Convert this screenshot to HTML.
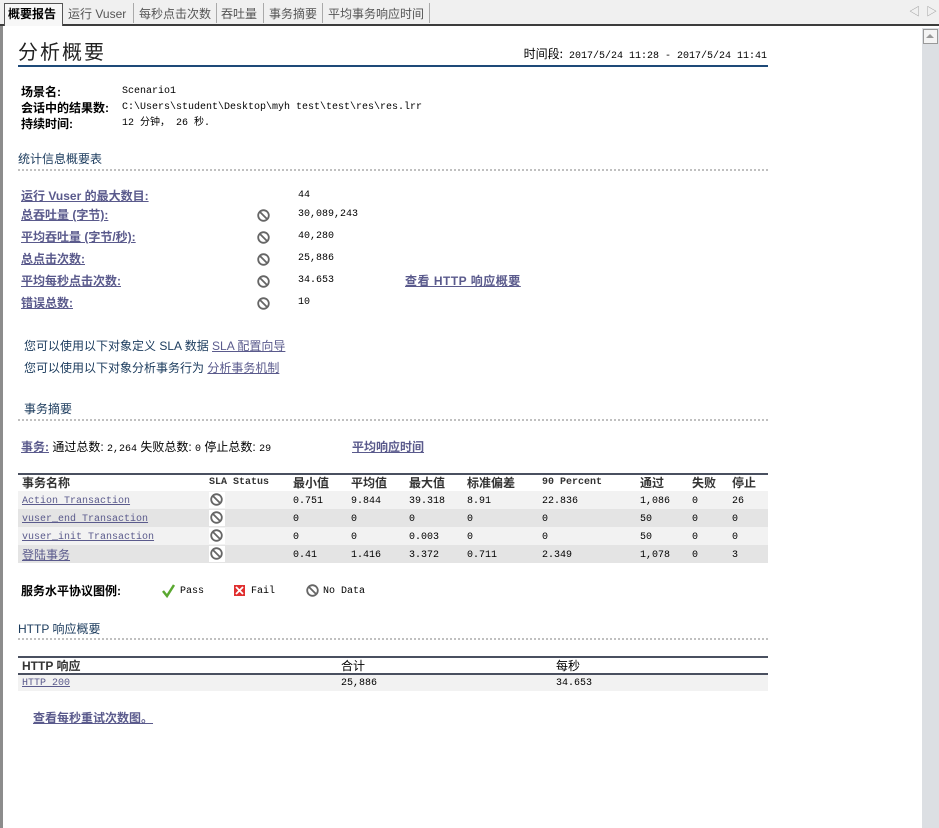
<!DOCTYPE html>
<html><head><meta charset="utf-8">
<style>
*{margin:0;padding:0;box-sizing:border-box}
body{width:939px;height:828px;background:#fff;position:relative;overflow:hidden;font-family:"Liberation Sans","Noto Sans CJK SC",sans-serif;font-size:12px;color:#000}
.t{position:absolute;white-space:nowrap;line-height:14px}
.m{font-family:"Liberation Mono","Noto Sans CJK SC",monospace;font-size:10px}
.b{font-weight:bold}
.lk{color:#5a5a8c;text-decoration:underline}
.bl{font-weight:bold;color:#5a5a8c;text-decoration:underline}
.dot{position:absolute;left:18px;width:750px;height:0;border-top:2px dotted #c0c0c0}
.row{position:absolute;left:18px;width:750px;height:18px}
</style></head><body>
<div style="position:absolute;left:0;top:0;width:939px;height:24px;background:#f0f0f0"></div>
<div style="position:absolute;left:0;top:24px;width:939px;height:2px;background:#3c3c3c"></div>
<div style="position:absolute;left:4px;top:3px;width:59px;height:23px;background:#f7f7f7;border:1px solid #555;border-bottom:none"></div>
<div class="t" style="left:8px;top:7px;font-size:12px;font-weight:bold">概要报告</div>
<div class="t" style="left:68px;top:7px;color:#555">运行 Vuser</div>
<div style="position:absolute;left:133px;top:3px;width:1px;height:20px;background:#aaa"></div>
<div class="t" style="left:139px;top:7px;color:#555">每秒点击次数</div>
<div style="position:absolute;left:216px;top:3px;width:1px;height:20px;background:#aaa"></div>
<div class="t" style="left:221px;top:7px;color:#555">吞吐量</div>
<div style="position:absolute;left:263px;top:3px;width:1px;height:20px;background:#aaa"></div>
<div class="t" style="left:269px;top:7px;color:#555">事务摘要</div>
<div style="position:absolute;left:322px;top:3px;width:1px;height:20px;background:#aaa"></div>
<div class="t" style="left:328px;top:7px;color:#555">平均事务响应时间</div>
<div style="position:absolute;left:429px;top:3px;width:1px;height:20px;background:#aaa"></div>
<div class="t" style="left:909px;top:5px;color:#999;font-size:11px">◁&nbsp;&nbsp;▷</div>
<div style="position:absolute;left:0;top:26px;width:3px;height:802px;background:#8c8c8c"></div>
<div style="position:absolute;left:922px;top:28px;width:17px;height:800px;background:#dcdfe3"></div>
<div style="position:absolute;left:923px;top:29px;width:15px;height:15px;background:#f4f4f4;border:1px solid #999"></div>
<div style="position:absolute;left:926px;top:34px;width:0;height:0;border-left:4px solid transparent;border-right:4px solid transparent;border-bottom:4px solid #999"></div>

<div class="t" style="left:18px;top:41px;font-size:20px;line-height:24px;color:#222;letter-spacing:2px">分析概要</div>
<div class="t m" style="right:172px;top:47px"><span style="font-family:'Noto Sans CJK SC';font-size:12px">时间段:</span> 2017/5/24 11:28 - 2017/5/24 11:41</div>
<div style="position:absolute;left:18px;top:65px;width:750px;height:2px;background:#1e4a78"></div>

<div class="t b" style="left:21px;top:85px">场景名:</div>
<div class="t m" style="left:122px;top:85px">Scenario1</div>
<div class="t b" style="left:21px;top:101px">会话中的结果数:</div>
<div class="t m" style="left:122px;top:101px">C:\Users\student\Desktop\myh test\test\res\res.lrr</div>
<div class="t b" style="left:21px;top:117px">持续时间:</div>
<div class="t m" style="left:122px;top:117px">12 分钟， 26 秒.</div>

<div class="t" style="left:18px;top:152px;color:#1a3a5c">统计信息概要表</div>
<div class="dot" style="top:169px"></div>

<div class="t bl" style="left:21px;top:189px">运行 Vuser 的最大数目:</div>
<div class="t m" style="left:298px;top:189px">44</div>
<div class="t bl" style="left:21px;top:208px">总吞吐量 (字节):</div>
<div class="t m" style="left:298px;top:208px">30,089,243</div>
<div class="t bl" style="left:21px;top:230px">平均吞吐量 (字节/秒):</div>
<div class="t m" style="left:298px;top:230px">40,280</div>
<div class="t bl" style="left:21px;top:252px">总点击次数:</div>
<div class="t m" style="left:298px;top:252px">25,886</div>
<div class="t bl" style="left:21px;top:274px">平均每秒点击次数:</div>
<div class="t m" style="left:298px;top:274px">34.653</div>
<div class="t bl" style="left:405px;top:274px;letter-spacing:0.5px">查看 HTTP 响应概要</div>
<div class="t bl" style="left:21px;top:296px">错误总数:</div>
<div class="t m" style="left:298px;top:296px">10</div>

<div class="t" style="left:24px;top:339px;color:#1a3a5c">您可以使用以下对象定义 SLA 数据 <span class="lk">SLA 配置向导</span></div>
<div class="t" style="left:24px;top:361px;color:#1a3a5c">您可以使用以下对象分析事务行为 <span class="lk">分析事务机制</span></div>

<div class="t" style="left:24px;top:402px;color:#1a3a5c">事务摘要</div>
<div class="dot" style="top:419px"></div>
<div class="t" style="left:21px;top:440px"><span class="bl">事务:</span> 通过总数: <span class="m">2,264</span> 失败总数: <span class="m">0</span> 停止总数: <span class="m">29</span></div>
<div class="t bl" style="left:352px;top:440px">平均响应时间</div>

<div style="position:absolute;left:18px;top:473px;width:750px;height:2px;background:#4a5060"></div>
<div class="row" style="top:491px;background:#f2f2f2"></div>
<div class="row" style="top:509px;background:#e4e4e4"></div>
<div class="row" style="top:527px;background:#f2f2f2"></div>
<div class="row" style="top:545px;background:#e4e4e4"></div>
<div class="t b" style="left:22px;top:476px;color:#333">事务名称</div>
<div class="t m b" style="left:209px;top:476px;color:#333">SLA Status</div>
<div class="t b" style="left:293px;top:476px;color:#333">最小值</div>
<div class="t b" style="left:351px;top:476px;color:#333">平均值</div>
<div class="t b" style="left:409px;top:476px;color:#333">最大值</div>
<div class="t b" style="left:467px;top:476px;color:#333">标准偏差</div>
<div class="t m b" style="left:542px;top:476px;color:#333">90 Percent</div>
<div class="t b" style="left:640px;top:476px;color:#333">通过</div>
<div class="t b" style="left:692px;top:476px;color:#333">失败</div>
<div class="t b" style="left:732px;top:476px;color:#333">停止</div>

<div class="t m lk" style="left:22px;top:495px">Action Transaction</div>
<div class="t m lk" style="left:22px;top:513px">vuser_end Transaction</div>
<div class="t m lk" style="left:22px;top:531px">vuser_init Transaction</div>
<div class="t lk" style="left:22px;top:548px">登陆事务</div>

<div class="t m" style="left:293px;top:495px">0.751</div><div class="t m" style="left:351px;top:495px">9.844</div><div class="t m" style="left:409px;top:495px">39.318</div><div class="t m" style="left:467px;top:495px">8.91</div><div class="t m" style="left:542px;top:495px">22.836</div><div class="t m" style="left:640px;top:495px">1,086</div><div class="t m" style="left:692px;top:495px">0</div><div class="t m" style="left:732px;top:495px">26</div>
<div class="t m" style="left:293px;top:513px">0</div><div class="t m" style="left:351px;top:513px">0</div><div class="t m" style="left:409px;top:513px">0</div><div class="t m" style="left:467px;top:513px">0</div><div class="t m" style="left:542px;top:513px">0</div><div class="t m" style="left:640px;top:513px">50</div><div class="t m" style="left:692px;top:513px">0</div><div class="t m" style="left:732px;top:513px">0</div>
<div class="t m" style="left:293px;top:531px">0</div><div class="t m" style="left:351px;top:531px">0</div><div class="t m" style="left:409px;top:531px">0.003</div><div class="t m" style="left:467px;top:531px">0</div><div class="t m" style="left:542px;top:531px">0</div><div class="t m" style="left:640px;top:531px">50</div><div class="t m" style="left:692px;top:531px">0</div><div class="t m" style="left:732px;top:531px">0</div>
<div class="t m" style="left:293px;top:549px">0.41</div><div class="t m" style="left:351px;top:549px">1.416</div><div class="t m" style="left:409px;top:549px">3.372</div><div class="t m" style="left:467px;top:549px">0.711</div><div class="t m" style="left:542px;top:549px">2.349</div><div class="t m" style="left:640px;top:549px">1,078</div><div class="t m" style="left:692px;top:549px">0</div><div class="t m" style="left:732px;top:549px">3</div>

<svg width="939" height="828" style="position:absolute;left:0;top:0" fill="none">
<defs><g id="nd"><circle cx="6.5" cy="6.5" r="5.3" stroke="#666" stroke-width="1.8"/><path d="M3 3L10 10" stroke="#666" stroke-width="1.8"/></g></defs>
<use href="#nd" x="257" y="209"/>
<use href="#nd" x="257" y="231"/>
<use href="#nd" x="257" y="253"/>
<use href="#nd" x="257" y="275"/>
<use href="#nd" x="257" y="297"/>
<rect x="209" y="492" width="16" height="16" fill="#fff"/><use href="#nd" x="210" y="493"/>
<rect x="209" y="510" width="16" height="16" fill="#fff"/><use href="#nd" x="210" y="511"/>
<rect x="209" y="528" width="16" height="16" fill="#fff"/><use href="#nd" x="210" y="529"/>
<rect x="209" y="546" width="16" height="16" fill="#fff"/><use href="#nd" x="210" y="547"/>
<path d="M163 591L167 596L174 585" stroke="#5aa830" stroke-width="2.5"/>
<rect x="234" y="585" width="11" height="11" fill="#e03030"/><path d="M236 587L243 594M243 587L236 594" stroke="#fff" stroke-width="1.8"/>
<use href="#nd" x="306" y="584"/>
</svg>
<div class="t b" style="left:21px;top:584px">服务水平协议图例:</div>
<div class="t m" style="left:180px;top:585px">Pass</div>
<div class="t m" style="left:251px;top:585px">Fail</div>
<div class="t m" style="left:323px;top:585px">No Data</div>

<div class="t" style="left:18px;top:622px;color:#1a3a5c">HTTP 响应概要</div>
<div class="dot" style="top:638px"></div>

<div style="position:absolute;left:18px;top:656px;width:750px;height:2px;background:#4a5060"></div>
<div style="position:absolute;left:18px;top:673px;width:750px;height:2px;background:#4a5060"></div>
<div class="row" style="top:675px;height:16px;background:#f2f2f2"></div>
<div class="t b" style="left:22px;top:659px;color:#333">HTTP 响应</div>
<div class="t" style="left:341px;top:659px">合计</div>
<div class="t" style="left:556px;top:659px">每秒</div>
<div class="t m lk" style="left:22px;top:677px">HTTP 200</div>
<div class="t m" style="left:341px;top:677px">25,886</div>
<div class="t m" style="left:556px;top:677px">34.653</div>

<div class="t bl" style="left:33px;top:711px">查看每秒重试次数图。</div>
</body></html>
